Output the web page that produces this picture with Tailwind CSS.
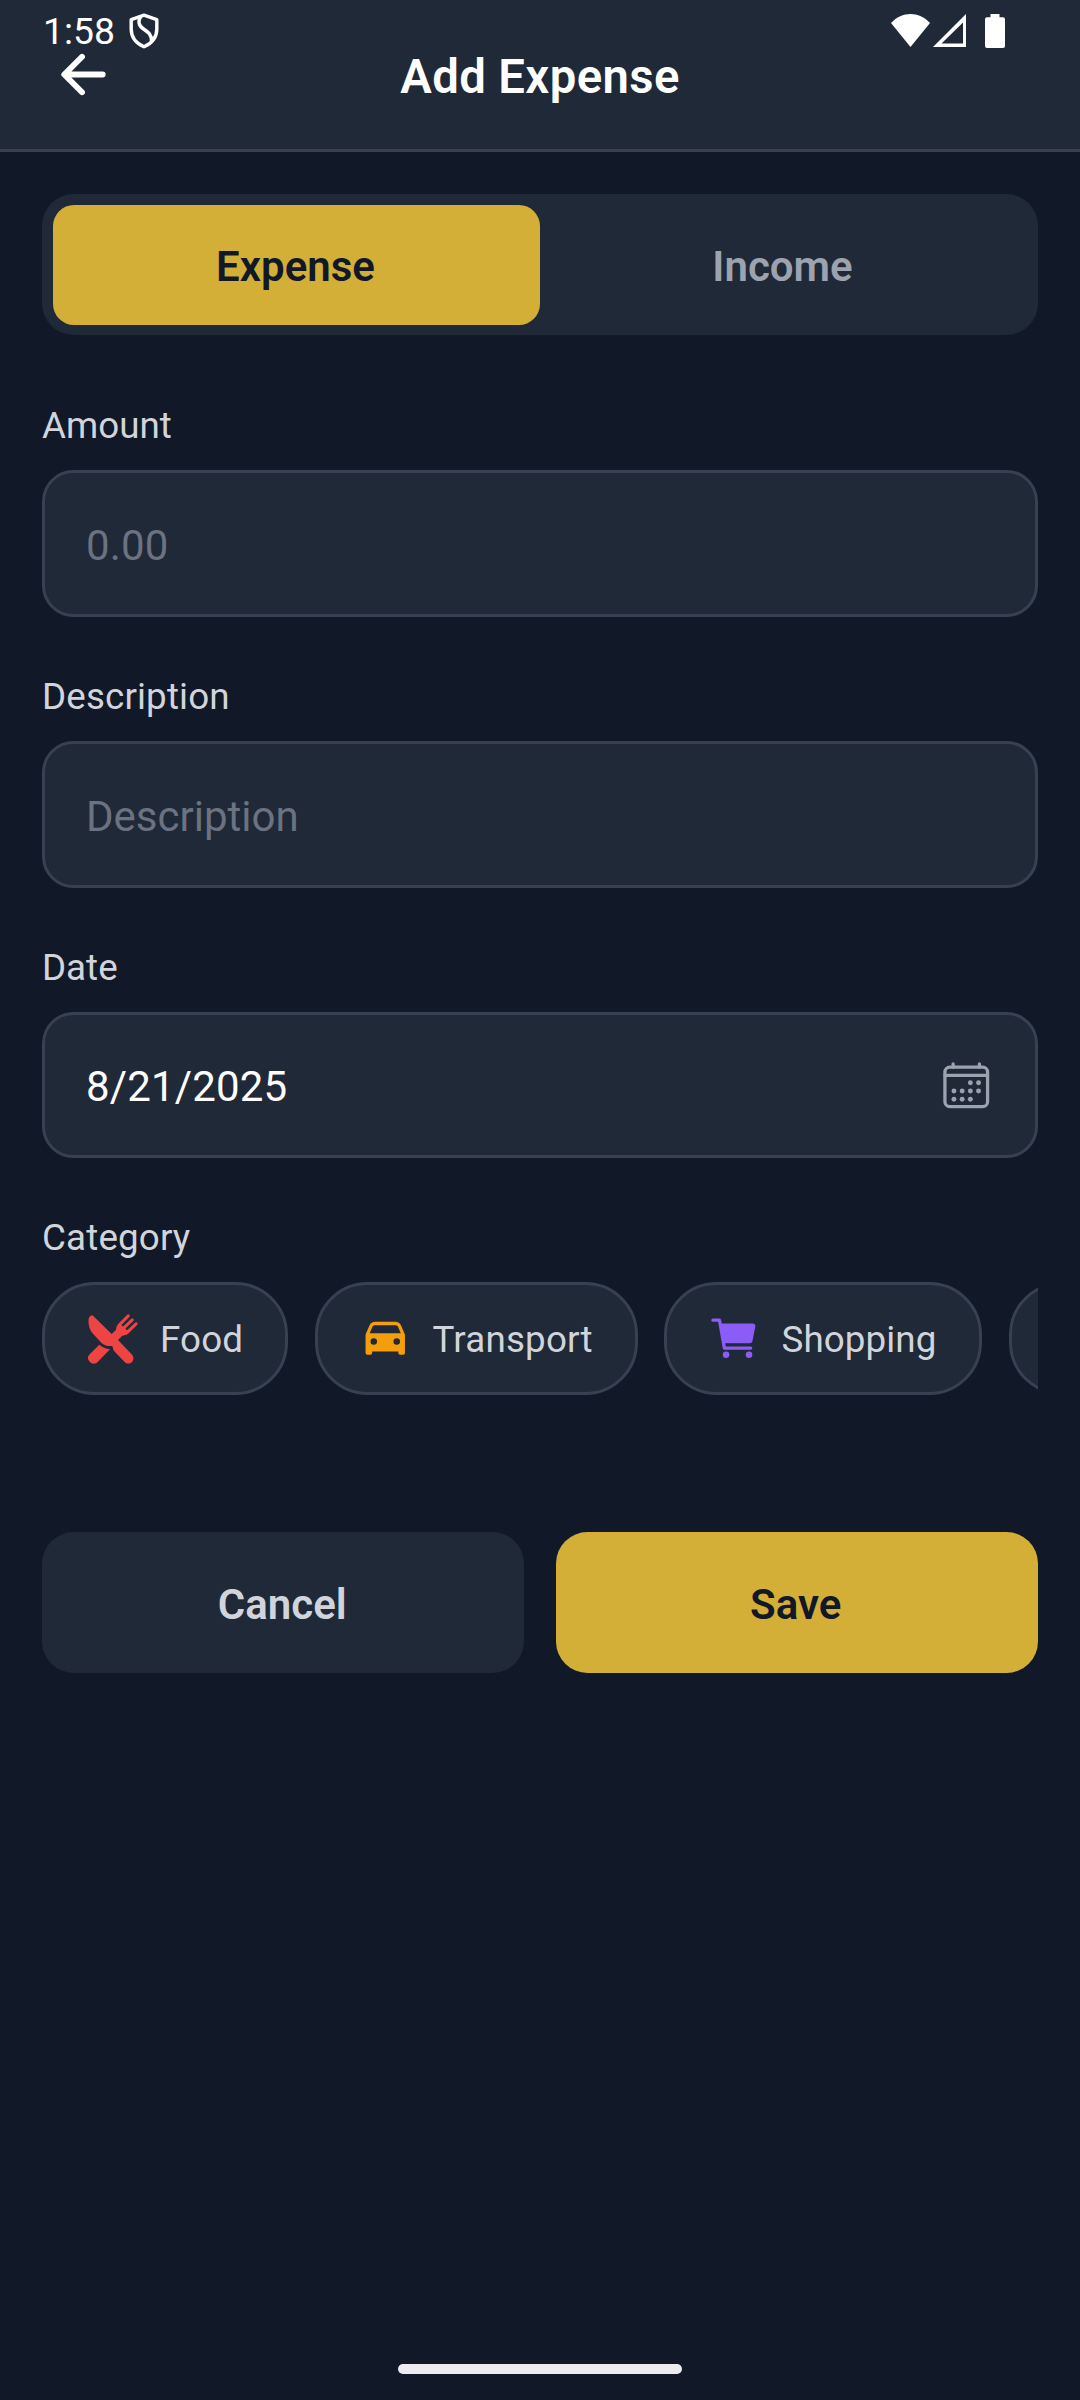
<!DOCTYPE html>
<html lang="en">
<head>
<meta charset="utf-8">
<title>Add Expense</title>
<script src="https://cdn.jsdelivr.net/npm/@tailwindcss/browser@4"></script>
</head>
<body class="bg-[#111827]">
<div class="relative flex h-[2400px] w-[1080px] flex-col overflow-hidden bg-[#111827] font-['Roboto',sans-serif] text-[#d1d5db]">

  <!-- System status bar, drawn over the header -->
  <div class="absolute inset-x-0 top-0 z-10 flex h-[62px] items-center justify-between pr-[75px] pl-[43px] text-white">
    <div class="flex items-center gap-[14px]">
      <span class="text-[37.3px] leading-[44px]">1:58</span>
      <svg class="h-[36px] w-[30px]" viewBox="0 0 30 36" fill="none" stroke="currentColor" stroke-width="3.4" stroke-linejoin="round"><path d="M15 2.2L27.8 6.6V16C27.8 24.5 22.5 30.5 15 33.8C7.5 30.5 2.2 24.5 2.2 16V6.6Z"/><path d="M12 3.3C8.5 8 9.5 12.500 14.500 16C20 19.800 22.600 21.800 22.500 28"/></svg>
    </div>
    <div class="flex items-center">
      <svg class="h-[34px] w-[114px]" viewBox="0 0 114 34" fill="currentColor"><path d="M0 9C11-3 28-3 39 9L19.500 33Z"/><path fill-rule="evenodd" d="M75 0V33H42ZM72 8.500L50.500 29.500H72Z"/><path d="M99.500 0h9v3.200h3.500a2 2 0 0 1 2 2V32a2 2 0 0 1-2 2H96a2 2 0 0 1-2-2V5.200a2 2 0 0 1 2-2h3.500Z"/></svg>
    </div>
  </div>

  <header class="flex h-[152px] shrink-0 items-center border-b-3 border-[#374151] bg-[#1f2937] px-[52px] text-white">
    <svg class="size-[63px]" viewBox="0 0 512 512" fill="none" stroke="currentColor" stroke-width="48" stroke-linecap="round" stroke-linejoin="round"><path d="M244 400L100 256l144-144M120 256h292"/></svg>
    <h1 class="flex-1 pt-1 text-center text-[47.25px] leading-[60px] font-semibold tracking-[0.4px]">Add Expense</h1>
    <div class="w-[63px]"></div>
  </header>

  <main class="flex flex-col px-[42px] pt-[42px]">
    <div class="flex h-[141px] rounded-[31.5px] bg-[#1f2937] p-[10.5px] text-[42px] font-semibold">
      <button class="flex-1 rounded-[21px] bg-[#d4af37] pt-1 pr-[1px] text-[#111827]">Expense</button>
      <button class="flex-1 pt-1 pr-[2px] text-[#9ca3af]">Income</button>
    </div>

    <label class="mt-[66px] h-[49px] text-[36.75px] leading-[50px]">Amount</label>
    <div class="mt-[20px] flex h-[147px] items-center rounded-[31.5px] border-3 border-[#374151] bg-[#1f2937] px-[41px] pt-1 text-[42px] tracking-[0.15px] text-[#6b7280]">0.00</div>

    <label class="mt-[55px] h-[49px] text-[36.75px] leading-[50px] tracking-[0.15px]">Description</label>
    <div class="mt-[20px] flex h-[147px] items-center rounded-[31.5px] border-3 border-[#374151] bg-[#1f2937] px-[41px] pt-1 text-[42px] text-[#6b7280]">Description</div>

    <label class="mt-[55px] h-[49px] text-[36.75px] leading-[50px]">Date</label>
    <div class="mt-[20px] flex h-[146px] items-center justify-between rounded-[31.5px] border-3 border-[#374151] bg-[#1f2937] pr-[43px] pl-[41px] text-[42px] text-white">
      <span class="pt-[2px] tracking-[0.15px]">8/21/2025</span>
      <svg class="size-[52.5px] text-[#9ca3af]" viewBox="0 0 512 512" fill="none" stroke="currentColor" stroke-width="32" stroke-linecap="round" stroke-linejoin="round"><rect x="48" y="80" width="416" height="384" rx="48"/><path d="M128 48v32M384 48v32M464 160H48"/><g fill="currentColor" stroke="none"><circle cx="296" cy="232" r="24"/><circle cx="376" cy="232" r="24"/><circle cx="136" cy="312" r="24"/><circle cx="216" cy="312" r="24"/><circle cx="296" cy="312" r="24"/><circle cx="376" cy="312" r="24"/><circle cx="136" cy="392" r="24"/><circle cx="216" cy="392" r="24"/><circle cx="296" cy="392" r="24"/></g></svg>
    </div>

    <label class="mt-[55px] h-[49px] text-[36.75px] leading-[50px] tracking-[0.15px]">Category</label>
    <div class="mt-[20px] flex h-[113px] gap-[26.5px] overflow-hidden text-[36.75px]">
      <div class="flex w-[246px] shrink-0 items-center gap-[21px] rounded-[52.5px] border-3 border-[#374151] bg-[#1f2937] pl-[42px]">
        <svg class="size-[52px] shrink-0 text-[#ef4444]" viewBox="170 335 156 156" fill="currentColor"><path d="M181 343Q185 340 189 344L244 398L257 385C258 374 261 370 267 364L290 341Q293 337 297 340Q300 343 297 347L274 370Q273 375 279 375L302 353Q306 349 309 352Q312 355 309 359L286 381Q285 387 291 386L314 364Q318 361 321 364Q324 367 320 371L298 393C291 400 287 402 276 403L263 416L304 459C311 466 311 474 306 481C299 488 290 489 283 482L252 450Q248 446 248 440Q248 435 244 434C230 435 222 432 213 424L188 397C176 384 173 364 175 352Q176 346 181 343Z"/><path d="M207 430C216 438 226 442 239 444L202 482C195 489 185 488 179 482C171 475 171 466 178 459Z"/></svg>
        <span class="pt-[3px] tracking-[0.15px]">Food</span>
      </div>
      <div class="flex w-[323px] shrink-0 items-center gap-[21px] rounded-[52.5px] border-3 border-[#374151] bg-[#1f2937] pl-[41.5px]">
        <svg class="size-[52.5px] shrink-0 text-[#f59e0b]" viewBox="0 0 512 512" fill="currentColor"><path d="M447.680 220.780a16 16 0 0 0-1-3.080l-37.780-88.160C400.190 109.170 379 96 354.890 96H157.110c-24.090 0-45.300 13.170-54 33.540L65.290 217.700A15.720 15.720 0 0 0 64 224v176a16 16 0 0 0 16 16h32a16 16 0 0 0 16-16v-16h256v16a16 16 0 0 0 16 16h32a16 16 0 0 0 16-16V224a16.150 16.150 0 0 0-.32-3.220zM144 320a32 32 0 1 1 32-32 32 32 0 0 1-32 32zm224 0a32 32 0 1 1 32-32 32 32 0 0 1-32 32zM104.260 208l28.230-65.850C136.110 133.690 146 128 157.110 128h197.780c11.100 0 21 5.690 24.620 14.150L407.740 208z"/></svg>
        <span class="pt-[3px] tracking-[0.2px]">Transport</span>
      </div>
      <div class="flex w-[318px] shrink-0 items-center gap-[21px] rounded-[52.5px] border-3 border-[#374151] bg-[#1f2937] pl-[41px]">
        <svg class="size-[52.5px] shrink-0 text-[#8b5cf6]" viewBox="0 0 512 512" fill="currentColor"><circle cx="176" cy="416" r="32"/><circle cx="400" cy="416" r="32"/><path d="M456.800 120.780a23.920 23.920 0 0 0-18.560-8.780H133.890l-6.130-34.780A16 16 0 0 0 112 64H48a16 16 0 0 0 0 32h50.580l45.660 258.780A16 16 0 0 0 160 368h256a16 16 0 0 0 0-32H173.420l-5.640-32h241.660A24.070 24.070 0 0 0 433 284.710l28.800-144a24 24 0 0 0-5-19.930z"/></svg>
        <span class="pt-[3px] tracking-[0.1px]">Shopping</span>
      </div>
      <div class="w-[300px] shrink-0 rounded-[52.5px] border-3 border-[#374151] bg-[#1f2937]"></div>
    </div>

    <div class="mt-[137px] flex h-[141px] gap-[32px] text-[42px] font-semibold">
      <button class="flex-1 rounded-[31.5px] bg-[#1f2937] pt-1 pr-[1px]">Cancel</button>
      <button class="flex-1 rounded-[31.5px] bg-[#d4af37] pt-1 pr-[2px] text-[#111827]">Save</button>
    </div>
  </main>

  <!-- Gesture handle -->
  <div class="mt-auto mb-[26px] h-[10px] w-[284px] shrink-0 self-center rounded-full bg-[#ececee]"></div>
</div>
</body>
</html>
